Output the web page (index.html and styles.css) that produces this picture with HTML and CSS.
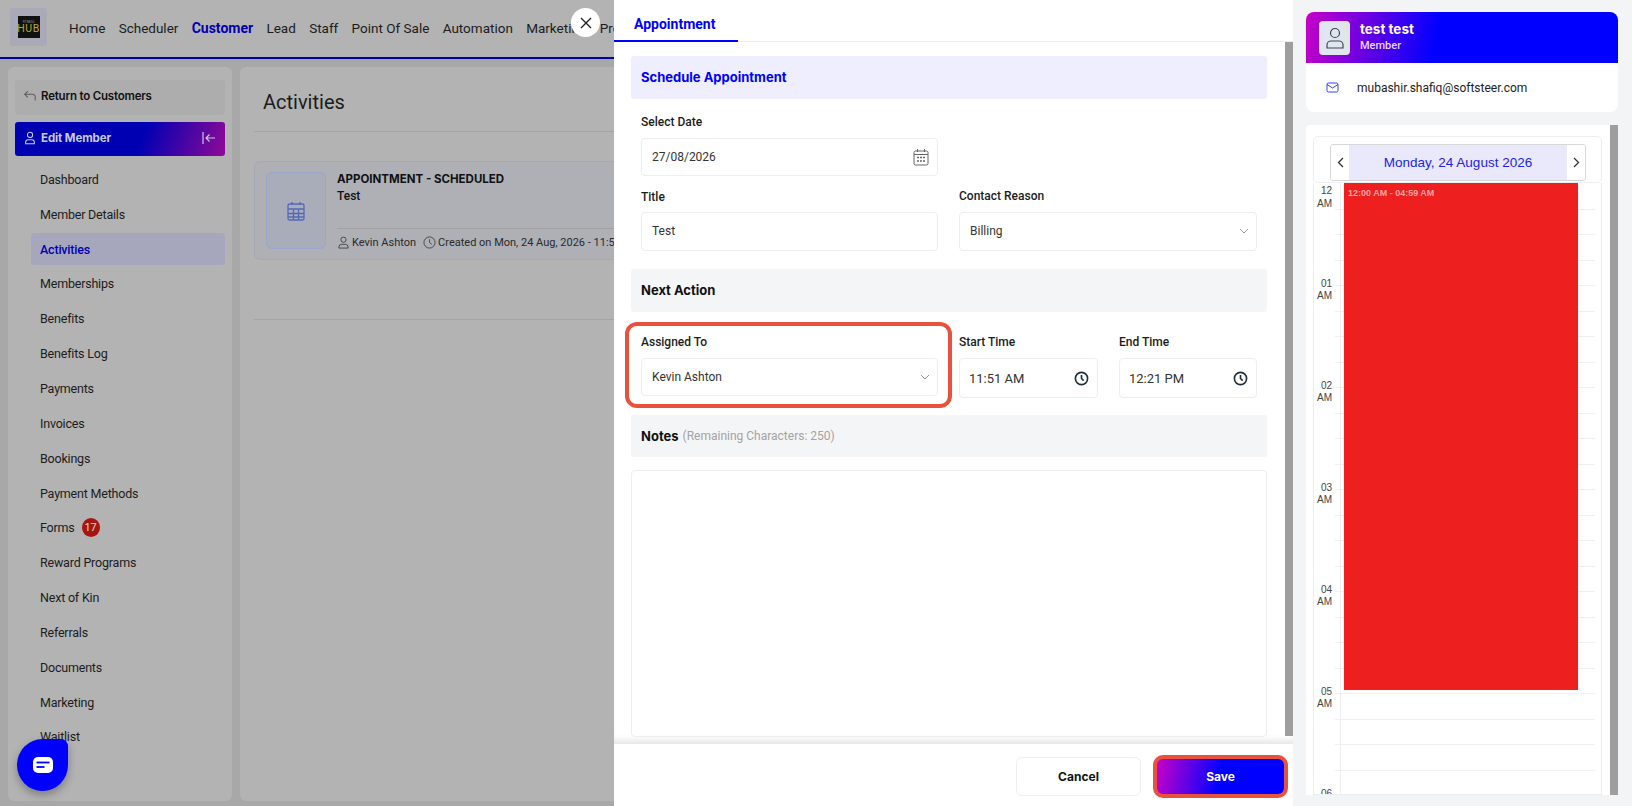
FILE: index.html
```html
<!DOCTYPE html>
<html lang="en">
<head>
<meta charset="utf-8">
<title>Appointment</title>
<link rel="stylesheet" href="styles.css">
</head>
<body>
<div class="app">
  <div class="page">
    <header class="topnav">
      <div class="logo"><div class="logo-mark"><span class="logo-small">FITNESS</span><span class="logo-big">HUB</span></div></div>
      <nav class="navlinks">
        <a>Home</a><a>Scheduler</a><a class="on">Customer</a><a>Lead</a><a>Staff</a><a>Point Of Sale</a><a>Automation</a><a>Marketing</a><a>Products</a>
      </nav>
    </header>
    <div class="page-body">
      <aside class="sidebar">
        <div class="return">
          <svg class="ic14" viewBox="0 0 16 16" fill="none" stroke="#5c5c5c" stroke-width="1.200"><path d="M5.500 2.500 2 6l3.500 3.500M2 6h8.500c2 0 3.500 1.400 3.500 3.500V13"/></svg>
          <span>Return to Customers</span>
        </div>
        <div class="edit">
          <svg class="ic14" viewBox="0 0 16 16" fill="none" stroke="#c9c9e8" stroke-width="1.200"><circle cx="8" cy="4.500" r="3"/><path d="M3 14.500v-1.500a3 3 0 0 1 3-3h4a3 3 0 0 1 3 3v1.500z"/></svg>
          <span class="edit-label">Edit Member</span>
          <svg class="ic16" viewBox="0 0 16 16" fill="none" stroke="#c9c9e8" stroke-width="1.200"><path d="M2 2v12M14 8H5M8.500 4.500 5 8l3.500 3.500"/></svg>
        </div>
        <ul class="menu">
          <li>Dashboard</li>
          <li>Member Details</li>
          <li class="active">Activities</li>
          <li>Memberships</li>
          <li>Benefits</li>
          <li>Benefits Log</li>
          <li>Payments</li>
          <li>Invoices</li>
          <li>Bookings</li>
          <li>Payment Methods</li>
          <li>Forms <span class="badge">17</span></li>
          <li>Reward Programs</li>
          <li>Next of Kin</li>
          <li>Referrals</li>
          <li>Documents</li>
          <li>Marketing</li>
          <li>Waitlist</li>
        </ul>
      </aside>
      <main class="content">
        <h1>Activities</h1>
        <div class="activity">
          <div class="tile">
            <svg width="20" height="22" viewBox="0 0 20 22" fill="none" stroke="#5568b8" stroke-width="1.300"><rect x="2" y="4" width="16" height="16" rx="1.500"/><path d="M2 9h16M2 13.500h16M2 17h16M7.500 9v11M12.500 9v11M6 2v3M14 2v3"/></svg>
          </div>
          <div class="activity-text">
            <div class="a-title">APPOINTMENT - SCHEDULED</div>
            <div class="a-sub">Test</div>
            <div class="a-meta">
              <svg class="ic12" viewBox="0 0 14 14" fill="none" stroke="#444" stroke-width="1"><circle cx="7" cy="4" r="2.800"/><path d="M2 13v-1a3 3 0 0 1 3-3h4a3 3 0 0 1 3 3v1z"/></svg>
              <span>Kevin Ashton</span>
              <svg class="ic12 meta-clock" viewBox="0 0 14 14" fill="none" stroke="#444" stroke-width="1"><circle cx="7" cy="7" r="6"/><path d="M7 3.500V7l2.500 2"/></svg>
              <span>Created on Mon, 24 Aug, 2026 - 11:51 AM</span>
            </div>
          </div>
        </div>
        <div class="rule"></div>
      </main>
    </div>
  </div>

  <section class="modal">
    <div class="tabs"><div class="tab">Appointment</div></div>
    <div class="modal-body">
      <div class="form">
        <div class="band band-blue">Schedule Appointment</div>
        <div class="row row-date">
          <div class="field">
            <label>Select Date</label>
            <div class="input input-date">27/08/2026
              <svg width="16" height="18" viewBox="0 0 16 18" fill="none" stroke="#666" stroke-width="1"><rect x="1" y="3" width="14" height="14" rx="1.500"/><path d="M1 6.500h14M4.500 1v3M11.500 1v3"/><path d="M4 9.500h2M7 9.500h2M10 9.500h2M4 13h2M7 13h2M10 13h2" stroke-width="1.500"/></svg>
            </div>
          </div>
        </div>
        <div class="row row-title">
          <div class="field">
            <label class="lower">Title</label>
            <div class="input tall">Test</div>
          </div>
          <div class="field">
            <label>Contact Reason</label>
            <div class="input tall">Billing
              <svg class="chev" width="10" height="6" viewBox="0 0 10 6" fill="none" stroke="#999" stroke-width="1"><path d="M1 1l4 4 4-4"/></svg>
            </div>
          </div>
        </div>
        <div class="band band-grey">Next Action</div>
        <div class="row row-assign">
          <div class="field assigned">
            <label>Assigned To</label>
            <div class="input">Kevin Ashton
              <svg class="chev" width="10" height="6" viewBox="0 0 10 6" fill="none" stroke="#999" stroke-width="1"><path d="M1 1l4 4 4-4"/></svg>
            </div>
          </div>
          <div class="field">
            <label>Start Time</label>
            <div class="input time">11:51 AM
              <svg width="15" height="15" viewBox="0 0 14 14" fill="none" stroke="#1f2d3d" stroke-width="1.500"><circle cx="7" cy="7" r="5.700"/><path d="M7 3.800V7l2 2"/></svg>
            </div>
          </div>
          <div class="field">
            <label>End Time</label>
            <div class="input time">12:21 PM
              <svg width="15" height="15" viewBox="0 0 14 14" fill="none" stroke="#1f2d3d" stroke-width="1.500"><circle cx="7" cy="7" r="5.700"/><path d="M7 3.800V7l2 2"/></svg>
            </div>
          </div>
        </div>
        <div class="band band-grey band-notes">Notes <span class="hint">(Remaining Characters: 250)</span></div>
        <div class="textarea"></div>
      </div>
      <div class="scrollbar"></div>
    </div>
    <footer class="modal-foot">
      <button class="btn cancel">Cancel</button>
      <button class="btn save">Save</button>
    </footer>
  </section>

  <aside class="side">
    <div class="member">
      <div class="member-head">
        <div class="avatar">
          <svg width="20" height="22" viewBox="0 0 20 22" fill="none" stroke="#445" stroke-width="1.200"><circle cx="10" cy="6" r="4.500"/><path d="M2 21v-3a4 4 0 0 1 4-4h8a4 4 0 0 1 4 4v3z"/></svg>
        </div>
        <div>
          <div class="m-name">test test</div>
          <div class="m-role">Member</div>
        </div>
      </div>
      <div class="member-mail">
        <svg width="13" height="11" viewBox="0 0 13 11" fill="none" stroke="#3a3af5" stroke-width="1"><rect x="1" y="1" width="11" height="9" rx="1.500"/><path d="M1 2.500 6.500 6 12 2.500"/></svg>
        <span>mubashir.shafiq@softsteer.com</span>
      </div>
    </div>
    <div class="cal">
      <div class="cal-inner">
        <div class="cal-top">
          <div class="cal-nav">
            <button class="cal-arrow">
              <svg width="7" height="11" viewBox="0 0 7 11" fill="none" stroke="#333" stroke-width="1.300"><path d="M6 1 1.500 5.500 6 10"/></svg>
            </button>
            <div class="cal-date">Monday, 24 August 2026</div>
            <button class="cal-arrow">
              <svg width="7" height="11" viewBox="0 0 7 11" fill="none" stroke="#333" stroke-width="1.300"><path d="M1 1l4.500 4.500L1 10"/></svg>
            </button>
          </div>
        </div>
        <div class="cal-grid">
          <div class="slots">
            <div class="slot"><span class="hour">12<br>AM</span></div><div class="slot"></div><div class="slot"></div><div class="slot"></div>
            <div class="slot"><span class="hour">01<br>AM</span></div><div class="slot"></div><div class="slot"></div><div class="slot"></div>
            <div class="slot"><span class="hour">02<br>AM</span></div><div class="slot"></div><div class="slot"></div><div class="slot"></div>
            <div class="slot"><span class="hour">03<br>AM</span></div><div class="slot"></div><div class="slot"></div><div class="slot"></div>
            <div class="slot"><span class="hour">04<br>AM</span></div><div class="slot"></div><div class="slot"></div><div class="slot"></div>
            <div class="slot"><span class="hour">05<br>AM</span></div><div class="slot"></div><div class="slot"></div><div class="slot"></div>
            <div class="slot"><span class="hour">06<br>AM</span></div><div class="slot"></div><div class="slot"></div><div class="slot"></div>
          </div>
          <div class="event">12:00 AM - 04:59 AM</div>
        </div>
      </div>
      <div class="cal-scroll"></div>
    </div>
  </aside>

  <button class="close-btn" aria-label="Close">
    <svg width="12" height="12" viewBox="0 0 12 12" fill="none" stroke="#222" stroke-width="1.400"><path d="M1 1l10 10M11 1 1 11"/></svg>
  </button>
  <button class="chat" aria-label="Chat">
    <svg width="20" height="16" viewBox="0 0 20 16" fill="none"><rect x="0" y="0" width="20" height="16" rx="5" fill="#fff"/><path d="M3.500 5.500h13" stroke="#0000ff" stroke-width="1.800"/><path d="M3.500 10h8" stroke="#0000ff" stroke-width="1.800"/></svg>
  </button>
</div>
</body>
</html>
```

FILE: styles.css
```css
*, *::before, *::after { box-sizing: border-box; }
html, body { margin: 0; height: 100%; overflow: hidden; }
body { font-family: Roboto, "Liberation Sans", sans-serif; color: #222; }
ul { list-style: none; margin: 0; padding: 0; }
button { font-family: inherit; border: 0; padding: 0; }
svg { display: block; flex: none; }

.app { position: relative; display: flex; width: 1632px; height: 806px; overflow: hidden; }

/* dimmed page behind the drawer */
.page { width: 614px; flex: none; display: flex; flex-direction: column; background: #a8a8a8; overflow: hidden; }
.topnav { height: 59px; flex: none; display: flex; align-items: center; background: #b3b3b3; border-bottom: 2px solid #0000b3; padding: 0 0 2px 10px; }
.logo { width: 37px; height: 38px; flex: none; margin-top: -1px; background: #a9a9b8; border-radius: 3px; display: flex; align-items: center; justify-content: center; }
.logo-mark { width: 22px; height: 22px; background: #111; display: flex; flex-direction: column; align-items: center; justify-content: center; overflow: hidden; }
.logo-small { font-size: 3px; line-height: 4px; color: #999; }
.logo-big { font-size: 10.500px; line-height: 10px; color: #b9a724; letter-spacing: .5px; }
.navlinks { display: flex; gap: 13.300px; margin-left: 22px; font-size: 13.500px; white-space: nowrap; color: #1c1c1c; }
.navlinks .on { color: #0000b3; font-weight: 700; font-size: 14px; }

.page-body { flex: 1; display: flex; gap: 8px; padding: 8px 0 5px 8px; min-height: 0; }
.sidebar { width: 224px; flex: none; background: #b3b3b3; border-radius: 6px; padding: 13px 7px 0; overflow: hidden; }
.return { height: 35px; background: #adadad; border-radius: 4px; display: flex; align-items: center; gap: 4px; padding: 0 0 3px 8px; font-size: 11.500px; font-weight: 600; font-family: Inter, sans-serif; color: #111; letter-spacing: -.2px; }
.edit { height: 34px; margin-top: 7px; border-radius: 3px; display: flex; align-items: center; gap: 4px; padding: 0 8px 2px 8px; font-family: Inter, sans-serif; font-size: 11.500px; font-weight: 700; color: #c9c9e8; background: linear-gradient(110deg, #0000b3 60%, #8f0a96); letter-spacing: -.1px; }
.edit-label { flex: 1; }
.menu { margin-top: 6px; padding-left: 16px; font-size: 12.500px; letter-spacing: -.2px; color: #1c1c1c; }
.menu li { height: 34.850px; display: flex; align-items: center; padding-left: 9px; gap: 7px; }
.menu li.active { height: 32px; margin: 1.425px 0; background: #a6a6bd; border-radius: 4px; color: #0000b3; font-weight: 500; }
.badge { width: 18px; height: 19px; border-radius: 50%; background: #a61510; color: #ddd; font-size: 11px; letter-spacing: 0; display: flex; align-items: center; justify-content: center; }

.content { flex: 1; background: #b3b3b3; border-radius: 6px 0 0 6px; padding-left: 14px; overflow: hidden; min-width: 0; }
.content h1 { margin: 0; height: 65px; font-size: 20px; font-weight: 400; line-height: 70px; padding-left: 9px; color: #1c1c1c; border-bottom: 1px solid #a5a5a5; }
.activity { margin-top: 29px; width: 600px; height: 99px; padding: 10px 11px; border: 1px solid #a5a9b5; border-radius: 6px; background: #aeb0b6; display: flex; gap: 11px; }
.tile { width: 60px; height: 77px; flex: none; border: 1px solid #9aa6cc; border-radius: 6px; background: #a9adba; display: flex; align-items: center; justify-content: center; }
.activity-text { flex: 1; white-space: nowrap; }
.a-title { font-family: Inter, sans-serif; font-size: 11.500px; font-weight: 700; line-height: 14px; color: #111; }
.a-sub { font-size: 12px; font-weight: 500; line-height: 17px; margin-top: 2px; color: #111; }
.a-meta { margin-top: 23px; border-top: 1px solid #a2a2a2; padding-top: 4px; display: flex; align-items: center; gap: 2px; font-size: 11px; color: #2a2a2a; height: 24px; }
.ic12 { width: 13px; height: 13px; }
.ic14 { width: 14px; height: 14px; }
.ic16 { width: 16px; height: 16px; }
.meta-clock { margin-left: 5px; }
.rule { margin-top: 59px; height: 1px; background: #a5a5a5; }

/* drawer */
.modal { width: 679px; flex: none; background: #fff; display: flex; flex-direction: column; }
.tabs { height: 42px; flex: none; border-bottom: 1px solid #eceef1; }
.tab { width: 124px; height: 42px; border-bottom: 2px solid #0000ff; padding-left: 20px; font-size: 14px; font-weight: 700; line-height: 48px; color: #0000ff; }
.modal-body { flex: 1; min-height: 0; display: flex; box-shadow: inset 0 -7px 6px -3px #e6e6e6; }
.form { flex: 1; padding: 14px 18px 0 17px; min-width: 0; }
.scrollbar { width: 8px; flex: none; height: 694px; background: #9e9e9e; }
.band { height: 43px; padding: 0 0 2px 10px; border-radius: 3px; display: flex; align-items: center; font-family: Inter, sans-serif; font-size: 13px; font-weight: 700; color: #111; }
.band-blue { background: #eeeefe; color: #0000ff; }
.band-grey { background: #f4f5f7; }
.band-notes { margin-top: 17px; height: 42px; gap: 4px; padding-bottom: 0; }
.hint { font-family: Roboto, sans-serif; font-size: 12px; font-weight: 400; color: #a3a3a3; }
.row { display: grid; padding: 0 10px; column-gap: 21px; }
.row-date { grid-template-columns: 297px; padding-top: 15px; }
.row-title { grid-template-columns: 297px 298px; padding-top: 12px; padding-bottom: 18px; }
.row-assign { grid-template-columns: 297px 139px 138px; padding-top: 22px; }
.field { position: relative; display: flex; flex-direction: column; }
.field label { height: 16px; line-height: 16px; margin-bottom: 8px; font-size: 12px; font-weight: 500; color: #1c1c1c; }
.field label.lower { padding-top: 1px; }
.input { position: relative; height: 38px; border: 1px solid #eceef1; border-radius: 4px; padding: 0 10px 1px; display: flex; align-items: center; justify-content: space-between; font-size: 12px; color: #333; background: #fff; }
.input.tall { height: 39px; padding-bottom: 2px; }
.input.time { height: 40px; font-size: 13px; padding: 0 8px 0 9px; }
.input-date { padding-right: 8px; }
.chev { margin-right: -3px; }
.assigned::after { content: ""; position: absolute; left: -16px; top: -12px; width: 327px; height: 86px; border: 4px solid #e8513c; border-radius: 12px; pointer-events: none; }
.textarea { margin-top: 13px; height: 267px; border: 1px solid #eceef1; border-radius: 4px; }
.modal-foot { position: relative; height: 62px; flex: none; background: #fff; display: flex; align-items: center; gap: 12px; padding: 2px 5px 0 402px; }
.btn { height: 39px; border-radius: 6px; font-family: Inter, sans-serif; font-size: 12px; font-weight: 700; }
.cancel { width: 125px; background: #fff; border: 1px solid #eceef1; color: #111; }
.save { width: 135px; height: 43px; border: 4px solid #e8513c; border-radius: 10px; color: #fff; background: linear-gradient(100deg, #c800c8, #0000ff 50%); }

/* right column */
.side { flex: 1; background: #f3f4f6; padding: 12px 14px 11px 13px; display: flex; flex-direction: column; gap: 13px; min-width: 0; }
.member { height: 100px; flex: none; background: #fff; border-radius: 8px; overflow: hidden; }
.member-head { height: 51px; padding: 9px 13px 0; display: flex; gap: 10px; background: linear-gradient(100deg, #c800c8, #0000ff 42%); color: #fff; }
.avatar { width: 31px; height: 34px; flex: none; border-radius: 4px; background: #dfe6ef; display: flex; align-items: center; justify-content: center; }
.m-name { font-family: Inter, sans-serif; font-size: 13.500px; font-weight: 700; line-height: 16px; }
.m-role { font-size: 11px; font-weight: 500; line-height: 16px; margin-top: 1px; color: #e6d8ff; }
.member-mail { height: 49px; display: flex; align-items: center; gap: 18px; padding-left: 20px; font-size: 12px; color: #222; }
.cal { flex: 1; min-height: 0; background: #fff; display: flex; padding: 11px 0 0 7px; border-radius: 4px 0 0 0; overflow: hidden; }
.cal-inner { width: 289px; flex: none; display: flex; flex-direction: column; }
.cal-scroll { width: 8px; flex: none; margin: -11px 0 0 auto; background: #9e9e9e; }
.cal-top { height: 47px; flex: none; border: 1px solid #eceef1; border-radius: 5px; padding: 7px 15px 0 16px; }
.cal-nav { height: 37px; border: 1px solid #d8d8d8; border-radius: 3px; display: flex; overflow: hidden; }
.cal-arrow { width: 18px; flex: none; background: #fff; display: flex; align-items: center; justify-content: center; }
.cal-date { flex: 1; background: #e9e9fb; color: #2222ee; font-family: "Liberation Sans", sans-serif; font-size: 13.500px; display: flex; align-items: center; justify-content: center; }
.cal-grid { position: relative; flex: 1; min-height: 0; border: 1px solid #eceef1; border-top: 0; border-radius: 0; overflow: hidden; }
.slots { padding: 1px 6px 0 21px; }
.slots::before { content: ""; position: absolute; left: 26px; top: 0; bottom: 0; width: 1px; background: #eceef1; }
.slot { position: relative; height: 25.500px; border-bottom: 1px solid #eef0f2; }
.hour { position: absolute; right: calc(100% + 3px); top: -8.500px; width: 30px; text-align: right; font-family: "Liberation Sans", sans-serif; font-size: 10px; line-height: 12.500px; color: #444; }
.slot:first-child .hour { top: 1px; }
.event { position: absolute; left: 30px; top: 0; width: 234px; height: 507px; padding: 5px 4px; background: #ee1f1f; font-family: "Liberation Sans", sans-serif; font-size: 9px; font-weight: 700; color: #f9a3a3; }

/* floating controls */
.close-btn { position: absolute; left: 571px; top: 8px; width: 29px; height: 29px; border-radius: 50%; background: #fff; display: flex; align-items: center; justify-content: center; }
.chat { position: absolute; left: 17px; top: 739px; width: 51px; height: 52px; background: #0000ff; border-radius: 50% 14% 50% 50%; box-shadow: 0 4px 8px rgba(0,0,0,.3); display: flex; align-items: center; justify-content: center; }
```
